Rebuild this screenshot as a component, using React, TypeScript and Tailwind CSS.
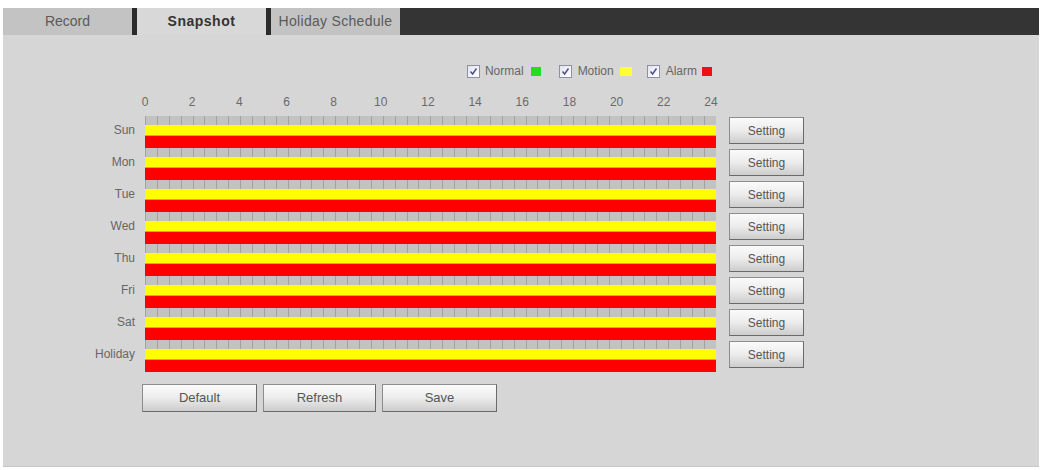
import React from 'react';

const days = ['Sun', 'Mon', 'Tue', 'Wed', 'Thu', 'Fri', 'Sat', 'Holiday'];
const hours = [0, 2, 4, 6, 8, 10, 12, 14, 16, 18, 20, 22, 24];
const ticks = Array.from({ length: 48 }, (_, i) => i);

const CheckBox = () => (
  <span className="w-[13px] h-[13px] border border-[#8e8fa6] bg-gradient-to-br from-[#e4e4ee] to-white flex items-center justify-center">
    <svg width="9" height="9" viewBox="0 0 9 9">
      <path d="M1.5 4.5 L3.6 7 L7.5 1.5" fill="none" stroke="#4a4e8c" strokeWidth="1.4" />
    </svg>
  </span>
);

const Btn = ({ label, className }: { label: string; className: string }) => (
  <button className={`border border-[#8c8c8c] border-b-[#6a6a6a] border-r-[#6a6a6a] bg-gradient-to-b from-[#fbfbfb] via-[#ececec] to-[#cccccc] text-[#555] text-[12px] ${className}`}>
    {label}
  </button>
);

export default function App() {
  return (
    <div className="w-[1042px] h-[470px] bg-white pt-[8px] px-[3px] font-['Liberation_Sans',Arial,sans-serif] overflow-hidden">
      <div className="flex h-[27px]">
        <div className="w-[129px] bg-[#c3c3c3] flex items-center justify-center text-[14px] text-[#5a5a5a]">Record</div>
        <div className="w-[5px] bg-[#2b2b2b]" />
        <div className="w-[129px] bg-[#d8d8d8] flex items-center justify-center text-[14px] font-bold text-[#333] tracking-[0.5px]">Snapshot</div>
        <div className="w-[5px] bg-[#2b2b2b]" />
        <div className="w-[129px] bg-[#c3c3c3] flex items-center justify-center text-[14px] text-[#5a5a5a] tracking-[0.3px]">Holiday Schedule</div>
        <div className="flex-1 bg-[#343434]" />
      </div>

      <div className="h-[432px] bg-[#d6d6d6] border-b border-[#c6c6c6]">
        <div className="flex pt-[29px]">
          <div className="w-[132px]" />
          <div className="ml-[10px] w-[571px] flex justify-end items-center text-[12px] text-[#666] h-[14px] pr-[4px]">
            <CheckBox />
            <span className="ml-[5px]">Normal</span>
            <span className="ml-[7px] w-[10px] h-[9px] bg-[#22dd22]" />
            <span className="ml-[18px]"><CheckBox /></span>
            <span className="ml-[6px]">Motion</span>
            <span className="ml-[6px] w-[12px] h-[9px] bg-[#ffff33]" />
            <span className="ml-[15px]"><CheckBox /></span>
            <span className="ml-[6px]">Alarm</span>
            <span className="ml-[5px] w-[10px] h-[9px] bg-[#ee1111]" />
          </div>
        </div>

        <div className="flex mt-[17px] h-[14px]">
          <div className="w-[132px]" />
          <div className="ml-[10px] w-[566px] flex justify-between text-[12px] text-[#6a6a6a] leading-[14px]">
            {hours.map((h) => (
              <span key={h} className="w-0 flex justify-center whitespace-nowrap">{h}</span>
            ))}
          </div>
        </div>

        <div className="flex flex-col mt-[7px]">
          {days.map((d) => (
            <div key={d} className="flex h-[32px]">
              <div className="w-[132px] text-right text-[12px] text-[#666] pt-[7px] leading-[14px]">{d}</div>
              <div className="ml-[10px] w-[571px] flex flex-col">
                <div className="h-[9px] bg-[#c2c2c2] flex">
                  {ticks.map((t) => (
                    <div key={t} className="flex-1 border-l border-[#a2a2a2]" />
                  ))}
                </div>
                <div className="h-[11px] bg-[#ffff00] border-b border-[#f5a000]" />
                <div className="h-[12px] bg-[#ff0000]" />
              </div>
              <div className="ml-[13px] pt-[1px]">
                <Btn label="Setting" className="w-[75px] h-[27px]" />
              </div>
            </div>
          ))}
        </div>

        <div className="flex mt-[12px] pl-[139px] gap-[6px]">
          <Btn label="Default" className="w-[115px] h-[28px] text-[13px]" />
          <Btn label="Refresh" className="w-[113px] h-[28px] text-[13px]" />
          <Btn label="Save" className="w-[115px] h-[28px] text-[13px]" />
        </div>
      </div>
    </div>
  );
}
